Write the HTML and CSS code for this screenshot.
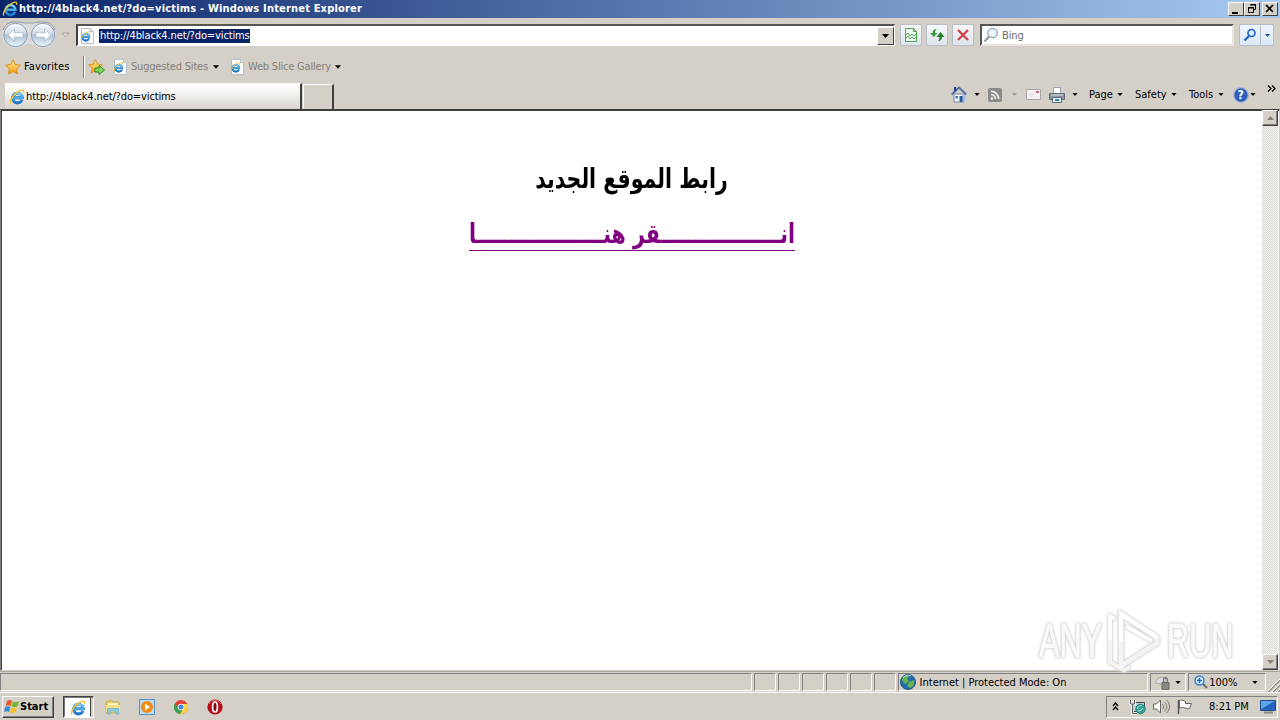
FILE: index.html
```html
<!DOCTYPE html>
<html lang="en">
<head>
    <meta charset="UTF-8">
    <title>http://4black4.net/?do=victims - Windows Internet Explorer</title>
    <link rel="stylesheet" href="styles.css">
</head>
<body>
    <!-- Shared icons -->
    <svg class="defs" width="0" height="0">
        <defs>
            <linearGradient id="blue" x1="0" y1="0" x2="0" y2="1"><stop offset="0" stop-color="#7ad6fc"/><stop offset="1" stop-color="#1a78cc"/></linearGradient>
            <linearGradient id="orb" x1="0" y1="0" x2="0" y2="1"><stop offset="0" stop-color="#fafcff"/><stop offset=".45" stop-color="#d3dae5"/><stop offset=".5" stop-color="#b4c0d1"/><stop offset="1" stop-color="#e6f8fe"/></linearGradient>
            <linearGradient id="gold" x1="0" y1="0" x2="0" y2="1"><stop offset="0" stop-color="#fff09a"/><stop offset="1" stop-color="#f59a0c"/></linearGradient>
        </defs>
        <symbol id="ie" viewBox="0 0 16 16">
            <path d="M13 11A4.900 4.900 0 1 1 13.400 8.800H5" fill="none" stroke="#1c65b0" stroke-width="2.900"/>
            <path d="M13 11A4.900 4.900 0 1 1 13.400 8.800H5" fill="none" stroke="url(#blue)" stroke-width="2.200"/>
            <path d="M2 14.500C-.2 12.200 5 4.400 10.500 1.800 13 .6 15.500 .7 14.500 3.800" fill="none" stroke="#f0c02c" stroke-width="1.400"/>
        </symbol>
        <symbol id="page-ie" viewBox="0 0 16 16">
            <path d="M2.500.5h9l3 3v12h-12z" fill="#fff" stroke="#b3bfcb"/>
            <path d="M11.500.5v3h3" fill="#dce6ef" stroke="#b3bfcb"/>
            <use href="#ie" x="1" y="3" width="11" height="11"/>
        </symbol>
        <symbol id="star" viewBox="0 0 16 16">
            <path d="M8 .8l2.200 4.700 5.200.7-3.800 3.600 1 5.200L8 12.500 3.400 15l1-5.200L.6 6.200l5.200-.7z" fill="url(#gold)" stroke="#d68a12" stroke-width=".9"/>
        </symbol>
        <symbol id="caret" viewBox="0 0 7 4"><path d="M0 0h7L3.500 4z" fill="currentColor"/></symbol>
    </svg>

    <div class="titlebar">
        <svg class="title-icon"><use href="#ie"/></svg>
        <span class="title-text">http://4black4.net/?do=victims - Windows Internet Explorer</span>
        <div class="win-buttons">
            <span class="win-btn"><svg width="14" height="12"><path d="M3 9h6v2H3z"/></svg></span>
            <span class="win-btn"><svg width="14" height="12"><path d="M5.500 1.500h5v5h-2M3.500 4.500h5v5h-5zM5 2h6M3 5h6" fill="none" stroke="#000"/></svg></span>
            <span class="win-btn close"><svg width="14" height="12"><path d="M3 2l7 7M10 2L3 9" stroke="#000" stroke-width="1.600"/></svg></span>
        </div>
    </div>

    <div class="navbar">
        <svg class="orbs" width="58" height="30" viewBox="0 0 58 30">
            <path d="M15 2c7 0 7 1 14 1s7-1 14-1a13 13 0 0 1 0 26c-7 0-7-4-14-4s-7 4-14 4a13 13 0 0 1 0-26z" fill="#dcdce0"/>
            <path d="M3 10c3-7 7-8 12-8 7 0 7 1 14 1s7-1 14-1c5 0 9 1 12 8" fill="none" stroke="#9497a3"/>
            <circle cx="15.500" cy="15" r="11.700" fill="url(#orb)" stroke="#8c9db4"/>
            <circle cx="43" cy="15" r="11.700" fill="url(#orb)" stroke="#8c9db4"/>
            <path d="M8 15l6.500-6v3.800H23v4.400h-8.500V21z" fill="#fff" stroke="#9db0c8" stroke-width=".7"/>
            <path d="M51 15l-6.500-6v3.800H36v4.400h8.500V21z" fill="#fff" stroke="#9db0c8" stroke-width=".7"/>
        </svg>
        <svg class="recent" width="9" height="6"><path d="M1 1h7L4.500 5z" fill="#ddd" stroke="#aaa59d"/></svg>
        <div class="address">
            <svg width="16" height="16"><use href="#page-ie"/></svg>
            <span class="url tight">http://4black4.net/?do=victims</span>
            <span class="drop"><svg width="7" height="4"><use href="#caret"/></svg></span>
        </div>
        <span class="tool"><svg width="16" height="16"><path d="M2.500 1.500h8l3 3v10h-11z" fill="#f1fbf1" stroke="#49a64c"/><path d="M10.500 1.500v3h3M3 8l2-2 2 3 2-2 2 2 2-2M3 11l2-2 2 3 2-2 2 2 2-2" fill="none" stroke="#49a64c"/></svg></span>
        <span class="tool"><svg width="16" height="16"><path d="M7.500 2C5.500 2 3.500 3 3.500 6H1l3.700 4L8.500 6H6c0-1.500.5-2.500 1.500-4z" fill="#35a23b"/><path d="M9 14c3 0 4-2 4-4h2.500l-4-5-4 5h3c0 2-.5 3-1.500 4z" fill="#23812d"/></svg></span>
        <span class="tool"><svg width="16" height="16"><path d="M3 3l10 10M13 3L3 13" stroke="#cf4448" stroke-width="2.400"/></svg></span>
        <div class="search">
            <svg width="16" height="16"><circle cx="9.500" cy="6" r="4.700" fill="#eaf5fc" stroke="#8fa3b5" stroke-width="1.300"/><path d="M6 9.500L1.500 14.500" stroke="#8b96a2" stroke-width="2"/></svg>
            <span class="tight">Bing</span>
        </div>
        <div class="search-go">
            <span><svg width="14" height="14"><circle cx="8.500" cy="5" r="3.500" fill="#d9edff" stroke="#2464c8" stroke-width="1.700"/><path d="M6 8l-4.500 4.500" stroke="#2464c8" stroke-width="2.300"/></svg></span>
            <span class="go-drop"><svg width="5" height="3"><use href="#caret"/></svg></span>
        </div>
    </div>

    <div class="favbar">
        <svg width="16" height="16"><use href="#star"/></svg>
        <span class="fav-label">Favorites</span>
        <svg class="add-fav" width="17" height="16"><use href="#star" width="15" height="15"/><path d="M7 9h4V6.500l5.500 4.500-5.500 4.500V13H7z" fill="#86d65b" stroke="#278f23"/></svg>
        <svg class="fav-icon" width="16" height="16"><use href="#page-ie"/></svg>
        <span class="fav-link suggested">Suggested Sites</span>
        <svg class="car" width="6" height="4"><use href="#caret"/></svg>
        <svg class="fav-icon second" width="16" height="16"><use href="#page-ie"/></svg>
        <span class="fav-link gallery">Web Slice Gallery</span>
        <svg class="car" width="6" height="4"><use href="#caret"/></svg>
    </div>

    <div class="tabbar">
        <div class="tab">
            <svg width="16" height="16"><use href="#ie"/></svg>
            <span class="tight">http://4black4.net/?do=victims</span>
        </div>
        <div class="new-tab"></div>
        <div class="commands">
            <svg width="16" height="17"><path d="M3 8h10v8H3z" fill="#f5faff" stroke="#7689ac"/><path d="M11 9h3v7h-3z" fill="#aabedb"/><path d="M.7 8.500L8 1.500l7.300 7" fill="none" stroke="#4e6ca9" stroke-width="1.800"/><path d="M3 1h2v4H3z" fill="#27358a"/><path d="M4.500 10H7v2.500H4.500z" fill="#327bbd"/><path d="M8.500 10h3v6h-3z" fill="#225b9c"/></svg>
            <svg class="car c1" width="6" height="3"><use href="#caret"/></svg>
            <svg class="rss" width="14" height="14"><rect width="14" height="14" rx="2" fill="#8b8b8b"/><circle cx="4" cy="10.500" r="1.300" fill="#fff"/><path d="M3 6.500a4.500 4.500 0 0 1 4.500 4.500M3 3.300a7.700 7.700 0 0 1 7.700 7.700" fill="none" stroke="#fff" stroke-width="1.500"/></svg>
            <svg class="car c2" width="5" height="3"><use href="#caret"/></svg>
            <svg class="mail" width="15" height="11"><path d="M.5.5h14v10H.5z" fill="#f5f3f4" stroke="#aaa4ad"/><path d="M10 2h3v2h-3z" fill="#cf6876"/><path d="M3 5h5M3 7h4" stroke="#dedbe0"/></svg>
            <svg class="printer" width="16" height="16"><path d="M4.500.5h7v7h-7z" fill="#fff" stroke="#9ba6b6"/><path d="M.5 6.500h15v6H.5z" fill="#8d949e" stroke="#626871"/><path d="M2 8h12" stroke="#dce2ea"/><path d="M3.500 10.500h9v5h-9z" fill="#edf6ff" stroke="#56697d"/><path d="M6 12h4v2H6z" fill="#268ab7"/></svg>
            <svg class="car c3" width="6" height="3"><use href="#caret"/></svg>
            <span class="menu page">Page</span>
            <svg class="car" width="6" height="3"><use href="#caret"/></svg>
            <span class="menu safety">Safety</span>
            <svg class="car" width="6" height="3"><use href="#caret"/></svg>
            <span class="menu tools">Tools</span>
            <svg class="car" width="6" height="3"><use href="#caret"/></svg>
            <svg class="help" width="16" height="16"><circle cx="8" cy="8" r="7.300" fill="#2f5fbd" stroke="#a7b6d4" stroke-width="1.300"/><text x="4.600" y="12.200">?</text></svg>
            <svg class="car c4" width="6" height="3"><use href="#caret"/></svg>
            <svg class="more" width="9" height="7"><path d="M1 .5l3 3-3 3M5 .5l3 3-3 3" fill="none" stroke="#000" stroke-width="1.300"/></svg>
        </div>
    </div>

    <div class="viewport">
        <div class="document" lang="ar" dir="rtl">
            <h1>رابط الموقع الجديد</h1>
            <a class="here">انـــــــــــــــــقر هنــــــــــــــــــا</a>
        </div>
        <div class="scrollbar">
            <span class="scroll-btn"><svg width="7" height="4"><path d="M0 4h7L3.500 0z" fill="#85817c"/></svg></span>
            <span class="scroll-btn"><svg width="7" height="4"><path d="M0 0h7L3.500 4z" fill="#85817c"/></svg></span>
        </div>
        <!-- Recorder watermark over the page -->
        <div class="watermark">
            <span class="any">ANY</span>
            <svg width="58" height="66" viewBox="0 0 58 66"><path d="M9 10L4 8v46l14 8 6-3" fill="none" stroke="#f4f4f4" stroke-width="4"/><path d="M15 6l36 24v5L15 58z" fill="none" stroke="#f4f4f4" stroke-width="5"/><path d="M4 32V9l5 2M15 33V6l36 23M20 18l26 15" fill="none" stroke="#fff" stroke-width="4"/></svg>
            <span class="run">RUN</span>
        </div>
    </div>

    <div class="statusbar">
        <span class="pane wide"></span>
        <span class="pane small"></span>
        <span class="pane small"></span>
        <span class="pane small"></span>
        <span class="pane small"></span>
        <span class="pane small"></span>
        <span class="pane small"></span>
        <span class="pane zone">
            <svg width="16" height="16"><circle cx="8" cy="8" r="7.500" fill="#246daa" stroke="#23527c"/><path d="M2 5c2-4 6-4 7-3L7 5l2 2-3 3-3-2zM9 8l5-2c1 4-1 7-4 8l-3-2z" fill="#66b64d"/><path d="M3 4c2-3 6-3 8-2" stroke="#b3e5f5" fill="none"/></svg>
            <span>Internet | Protected Mode: On</span>
        </span>
        <span class="pane privacy">
            <svg width="17" height="15"><path d="M1 8c2-5 7-7 10-5 2 2-1 5-4 6z" fill="#dedede" stroke="#a9a9a9"/><path d="M8 7.500h7v7H8z" fill="#898989" stroke="#676767"/><path d="M9.500 7V5c0-3 4-3 4 0v2" fill="none" stroke="#777" stroke-width="1.300"/></svg>
            <svg class="car" width="6" height="3"><use href="#caret"/></svg>
        </span>
        <span class="pane zoom">
            <svg width="14" height="14"><circle cx="5.500" cy="5.500" r="4.500" fill="#d7efff" stroke="#3484d1" stroke-width="1.500"/><path d="M3 5.500h5M5.500 3v5" stroke="#126acc" stroke-width="1.500"/><path d="M9 9l4 4" stroke="#716f70" stroke-width="2.400"/></svg>
            <span class="zoom-value">100%</span>
            <svg class="car" width="6" height="3"><use href="#caret"/></svg>
        </span>
        <svg class="grip" width="12" height="14"><path d="M0 14L13 1M5 14l8-8M10 14l3-3" stroke="#85817a" stroke-width="1.500"/><path d="M-1 14L13 0M4 14l9-9M9 14l4-4" stroke="#fff"/></svg>
    </div>

    <div class="taskbar">
        <div class="start">
            <svg width="16" height="15" viewBox="0 0 16 15"><path d="M3 2c2-1.500 4-1 5 0L6.700 7C5 6 3.500 6 1.700 7z" fill="#e95820"/><path d="M9 2.500c2 1 4 1 6-.5l-1.500 5c-2 1.500-4 1-5.800.4z" fill="#72b62d"/><path d="M1.300 8c2-1 3.500-1 5 0L5 13c-1.500-1-3-1-5 0z" fill="#3689d6"/><path d="M7.300 8.500c2 1 4 1 5.800-.3L11.700 13c-2 1.500-4 1-5.800.5z" fill="#f8be20"/></svg>
            <span>Start</span>
        </div>
        <div class="task-active"><span><svg width="16" height="16"><use href="#ie"/></svg></span></div>
        <svg class="launch explorer" width="16" height="16"><path d="M1 3l5-2 2 2h6v11H1z" fill="#e9c857" stroke="#c6a341" stroke-width=".7"/><path d="M3 4h10v5H3z" fill="#fff7cf"/><path d="M1 6h14v7H1z" fill="#f5df86"/><path d="M2.500 15V9.500h11V15h-2.500v-3H5v3z" fill="#8bcce8" stroke="#5daace" stroke-width=".7"/></svg>
        <svg class="launch" width="16" height="16"><path d="M.5.5h15v15H.5z" fill="#b9dcf4" stroke="#5495c5"/><circle cx="8" cy="8" r="6" fill="#f28a16"/><path d="M6 4.500l5 3.500-5 3.500z" fill="#fff"/></svg>
        <svg class="launch" width="16" height="16"><circle cx="8" cy="8" r="7" fill="#e34133"/><path d="M1.900 4.500A7 7 0 0 0 7 15l3.500-5.800H5z" fill="#31a650"/><path d="M8 5h6.300A7 7 0 0 1 7 15l3.500-5.500z" fill="#ffd23e"/><circle cx="8" cy="8" r="3.300" fill="#fff"/><circle cx="8" cy="8" r="2.500" fill="#4384dc"/></svg>
        <svg class="launch" width="16" height="16"><circle cx="8" cy="8" r="7.600" fill="#b80d18"/><path d="M2 5c3-5 9-5 12 0" fill="none" stroke="#e66b6b"/><ellipse cx="8" cy="8" rx="2.400" ry="5" fill="#8c0711" stroke="#fff" stroke-width="1.700"/></svg>
        <div class="tray">
            <svg class="up" width="7" height="9"><path d="M1 4l2.500-3L6 4M1 8l2.500-3L6 8" fill="none" stroke="#000" stroke-width="1.300"/></svg>
            <svg class="net" width="17" height="16"><path d="M4.500 3.500h11v9h-11z" fill="#bfcfd2" stroke="#445"/><path d="M1.500 1v4h4V1M3.500 5v9.500H8" fill="none" stroke="#fff" stroke-width="2.500"/><path d="M1.500 1v4h4V1M3.500 5v9.500H8" fill="none" stroke="#555"/><circle cx="11.500" cy="10" r="4.700" fill="#34a39a" stroke="#287d78"/><path d="M8 10c1-3 4-4 5-3M9 12c3 0 4-2 5-3" fill="none" stroke="#b9e8d5"/></svg>
            <svg class="vol" width="17" height="15"><path d="M.5 5h3L7.500 1v13l-4-4h-3z" fill="#fff" stroke="#66645f"/><path d="M9.500 5c1.500 1.500 1.500 4 0 5.500M11.500 3c3 3 3 6.500 0 9.500M13.500 1c4 4 4 9 0 13" fill="none" stroke="#77746f"/></svg>
            <svg class="flag" width="17" height="15"><path d="M1.500 1v14" stroke="#555" stroke-width="1.500"/><path d="M2.500 1.500c3-1 4 0 6 1v2h6l-2 5c-3 1-4-1-6-1s-3 0-4 1z" fill="#fff" stroke="#66645f"/></svg>
            <span class="clock">8:21 PM</span>
            <svg class="desktop" width="16" height="14"><path d="M.5.5h15v10H.5z" fill="#2464bf" stroke="#254c86"/><path d="M1 1h14L1 9z" fill="#5fa5eb"/><path d="M4 12.500h9" stroke="#888" stroke-width="2"/></svg>
        </div>
    </div>
</body>
</html>
```
FILE: styles.css
```css
* {
    box-sizing: border-box;
}
body {
    margin: 0;
    width: 1280px;
    height: 720px;
    overflow: hidden;
    display: flex;
    flex-direction: column;
    background: #d4d0c8;
    color: #000;
    font: 11px/14px "DejaVu Sans Condensed", "DejaVu Sans", sans-serif;
    font-stretch: condensed;
    white-space: nowrap;
}
svg {
    display: block;
    flex: none;
}
.defs {
    position: absolute;
}
.tight {
    letter-spacing: -.12px;
}
.titlebar {
    height: 18px;
    flex: none;
    display: flex;
    align-items: center;
    padding: 0 2px;
    background: linear-gradient(90deg, #0a246a, #a6caf0);
    color: #fff;
    font-weight: bold;
    letter-spacing: .18px;
}
.title-icon {
    width: 16px;
    height: 16px;
    margin-right: 1px;
}
.win-buttons {
    display: flex;
    margin-left: auto;
}
.win-btn {
    width: 16px;
    height: 14px;
    background: #d4d0c8;
    border: 1px solid;
    border-color: #fff #404040 #404040 #fff;
}
.win-btn.close {
    margin-left: 2px;
}
.navbar {
    height: 34px;
    flex: none;
    display: flex;
    align-items: center;
}
.recent {
    margin-left: 3px;
    margin-right: 6px;
}
.address {
    width: 819px;
    height: 22px;
    display: flex;
    align-items: center;
    padding-left: 1px;
    background: #fff;
    border: 1px solid;
    border-color: #555 #fff #fff #404040;
    border-left-width: 2px;
    border-top-width: 2px;
}
.url {
    margin-left: 4px;
    width: 151px;
    padding-left: 1px;
    color: #fff;
    background: #0a246a;
}
.drop {
    margin-left: auto;
    width: 17px;
    height: 18px;
    display: flex;
    align-items: center;
    justify-content: center;
    background: #d4d0c8;
    border: 1px solid;
    border-color: #fff #404040 #404040 #fff;
}
.tool {
    width: 22px;
    height: 22px;
    margin-left: 4px;
    display: flex;
    align-items: center;
    justify-content: center;
    border: 1px solid #b8bec9;
    border-radius: 2px;
    background: linear-gradient(#f6f7fa, #dfe3ec);
}
.address + .tool {
    margin-left: 5px;
}
.search {
    width: 254px;
    height: 22px;
    margin-left: 6px;
    display: flex;
    align-items: center;
    gap: 3px;
    padding-left: 1px;
    color: #6d6d6d;
    background: #fff;
    border: 2px solid;
    border-color: #555 #e8e5df #e8e5df #555;
}
.search span {
    padding-top: 2px;
}
.search-go {
    width: 35px;
    height: 22px;
    margin-left: 5px;
    display: flex;
    border: 1px solid #b4bdcc;
    border-radius: 2px;
    background: linear-gradient(#f0f5fc, #dce8f8);
    color: #2457a6;
}
.search-go span {
    width: 20px;
    display: flex;
    align-items: center;
    justify-content: center;
}
.search-go .go-drop {
    width: 13px;
    border-left: 1px solid #b4bdcc;
}
.favbar {
    height: 29px;
    flex: none;
    display: flex;
    align-items: center;
    padding-left: 5px;
}
.fav-label {
    width: 60px;
    height: 22px;
    line-height: 21px;
    margin-left: 3px;
    letter-spacing: .1px;
    border-right: 1px solid #808080;
    box-shadow: 1px 0 #fff;
}
.add-fav {
    margin-left: 4px;
}
.fav-icon {
    margin-left: 7px;
}
.second {
    margin-left: 10px;
}
.fav-link {
    margin-left: 3px;
    padding-top: 1px;
    color: #85817a;
    letter-spacing: -.2px;
}
.suggested {
    width: 82px;
}
.gallery {
    width: 87px;
}
.tabbar {
    height: 28px;
    flex: none;
    display: flex;
    align-items: flex-end;
    padding-left: 5px;
}
.tab {
    width: 297px;
    height: 26px;
    display: flex;
    align-items: center;
    gap: 1px;
    padding-left: 4px;
    background: linear-gradient(#fff, #f4f3f0 35%, #d8d4cd);
    border-top: 1px solid #fff;
    border-right: 2px solid #404040;
}
.new-tab {
    width: 31px;
    height: 25px;
    margin-left: 1px;
    border: 1px solid #fff;
    border-right: 2px solid #404040;
    border-bottom: 0;
}
.commands {
    height: 29px;
    display: flex;
    align-items: center;
    margin-left: 617px;
}
.c1 {
    margin-left: 7px;
}
.rss {
    margin-left: 8px;
}
.c2 {
    margin-left: 10px;
    color: #a19b93;
}
.mail {
    margin-left: 9px;
}
.printer {
    margin-left: 8px;
}
.c3 {
    margin-left: 7px;
}
.menu {
    margin-left: 12px;
}
.page {
    width: 28px;
    margin-left: 11px;
}
.safety {
    width: 36px;
}
.tools {
    width: 29px;
}
.help {
    margin-left: 9px;
}
.help text {
    fill: #fff;
    font-size: 12px;
    font-weight: bold;
}
.c4 {
    margin-left: 1px;
}
.more {
    margin: 0 0 13px 11px;
}
.viewport {
    position: relative;
    height: 562px;
    flex: none;
    display: flex;
    background: #fff;
    border: 1px solid;
    border-color: #404040 #d4d0c8 #d4d0c8 #808080;
    box-shadow: inset 1px 1px #404040;
}
.document {
    width: 1261px;
    padding-top: 49px;
    text-align: center;
    font-family: "DejaVu Sans", sans-serif;
    font-stretch: normal;
    font-weight: bold;
}
.document h1 {
    margin: 0;
    font-size: 27px;
    line-height: 40px;
    transform: scaleX(.76);
}
.here {
    display: inline-block;
    margin-top: 14px;
    height: 38px;
    font-size: 27px;
    line-height: 42px;
    color: #800080;
    border-bottom: 1px solid #800080;
    transform: scaleX(.762);
}
.scrollbar {
    width: 16px;
    display: flex;
    flex-direction: column;
    justify-content: space-between;
    background: repeating-conic-gradient(#fff 0 25%, #d4d0c8 0 50%) 0 0 / 2px 2px;
}
.scroll-btn {
    height: 16px;
    display: flex;
    align-items: center;
    justify-content: center;
    background: #d4d0c8;
    border: 1px solid;
    border-color: #fff #404040 #404040 #fff;
    box-shadow: inset -1px -1px #808080;
}
.watermark {
    position: absolute;
    left: 1038px;
    top: 498px;
    display: flex;
    align-items: center;
    font: 48px/66px "Liberation Sans", sans-serif;
    color: #fafafa;
    filter: drop-shadow(0 0 1px #ccc) drop-shadow(0 0 1px #ddd);
    -webkit-text-stroke: 1px #fafafa;
}
.any, .run {
    width: 67px;
    transform: scaleX(.64);
    transform-origin: left;
}
.run {
    margin-left: 3px;
}
.statusbar {
    height: 22px;
    flex: none;
    display: flex;
    align-items: center;
    border-top: 1px solid #aaa69e;
    border-bottom: 1px solid #fff;
}
.pane {
    height: 18px;
    margin-right: 2px;
    display: flex;
    align-items: center;
    border: 1px solid;
    border-color: #808080 #fff #fff #808080;
}
.wide {
    width: 753px;
}
.small {
    width: 22px;
}
.zone {
    width: 251px;
    gap: 4px;
    padding-left: 1px;
}
.zone span {
    padding-top: 2px;
}
.privacy {
    width: 36px;
    padding-left: 3px;
}
.privacy .car {
    margin-left: 4px;
}
.zoom {
    width: 78px;
    padding-left: 5px;
}
.zoom-value {
    margin-left: 1px;
    padding-top: 2px;
    width: 43px;
}
.grip {
    align-self: flex-end;
}
.taskbar {
    height: 27px;
    flex: none;
    display: flex;
    align-items: center;
    padding-left: 2px;
}
.start {
    width: 52px;
    height: 22px;
    display: flex;
    align-items: center;
    padding-left: 1px;
    font-weight: bold;
    border: 1px solid;
    border-color: #fff #404040 #404040 #fff;
    box-shadow: inset -1px -1px #808080;
}
.task-active {
    width: 31px;
    height: 22px;
    display: flex;
    margin-left: 9px;
    border: 1px solid;
    border-color: #404040 #fff #fff #404040;
    box-shadow: inset 1px 1px #808080;
}
.task-active span {
    width: 27px;
    padding: 2px 0 0 5px;
    background: #fff;
    border: 1px solid;
    border-color: #777 #404040 #fff #777;
}
.launch {
    margin-left: 18px;
}
.explorer {
    margin-left: 11px;
}
.tray {
    width: 172px;
    height: 22px;
    margin-left: auto;
    margin-right: 2px;
    display: flex;
    align-items: center;
    padding-left: 5px;
    border: 1px solid;
    border-color: #808080 #fff #fff #808080;
}
.net {
    margin-left: 10px;
}
.vol {
    margin-left: 7px;
}
.flag {
    margin-left: 7px;
}
.clock {
    width: 51px;
    padding-top: 1px;
    margin-left: 15px;
}
```
